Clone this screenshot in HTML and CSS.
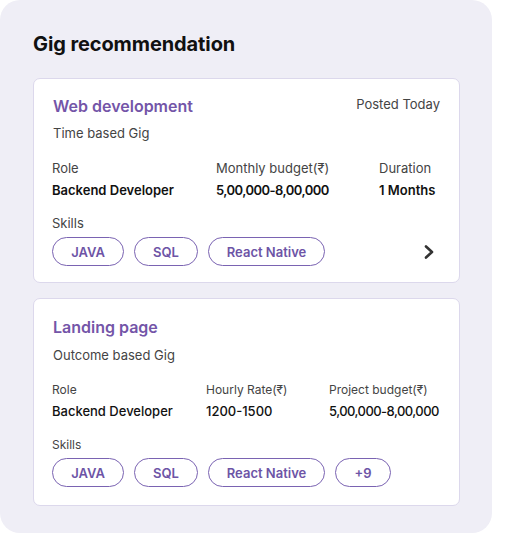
FILE: index.html
```html
<!DOCTYPE html>
<html>
<head>
<meta charset="utf-8">
<link rel="stylesheet" href="styles.css">
</head>
<body>
<div class="panel">
  <h1 class="heading">Gig recommendation</h1>
  <div class="card">
    <div class="card-head">
      <div class="gig-title">Web development</div>
      <div class="posted">Posted Today</div>
    </div>
    <div class="gig-type">Time based Gig</div>
    <div class="info info-a">
      <div class="label">Role</div>
      <div class="label">Monthly budget(₹)</div>
      <div class="label">Duration</div>
      <div class="value">Backend Developer</div>
      <div class="value num">5,00,000-8,00,000</div>
      <div class="value">1 Months</div>
    </div>
    <div class="skills-label">Skills</div>
    <div class="chips">
      <span class="chip chip-java">JAVA</span>
      <span class="chip chip-sql">SQL</span>
      <span class="chip chip-rn">React Native</span>
      <svg class="chevron" width="12" height="16" viewBox="0 0 12 16"><path d="M3 2.5 L9 8 L3 13.5" fill="none" stroke="#333" stroke-width="2.6" stroke-linecap="round" stroke-linejoin="round"/></svg>
    </div>
  </div>
  <div class="card card-b">
    <div class="card-head">
      <div class="gig-title">Landing page</div>
    </div>
    <div class="gig-type gig-type-b">Outcome based Gig</div>
    <div class="info info-b">
      <div class="label small">Role</div>
      <div class="label small">Hourly Rate(₹)</div>
      <div class="label small">Project budget(₹)</div>
      <div class="value medium">Backend Developer</div>
      <div class="value medium">1200-1500</div>
      <div class="value medium num">5,00,000-8,00,000</div>
    </div>
    <div class="skills-label small skills-b">Skills</div>
    <div class="chips">
      <span class="chip chip-java">JAVA</span>
      <span class="chip chip-sql">SQL</span>
      <span class="chip chip-rn">React Native</span>
      <span class="chip chip-more">+9</span>
    </div>
  </div>
</div>
</body>
</html>
```
FILE: styles.css
```css
* { box-sizing: border-box; }
html, body { margin: 0; padding: 0; background: #ffffff; }
body { font-family: Inter, "Noto Sans", sans-serif; }
.panel {
  width: 492px;
  height: 533px;
  background: #efeef6;
  border-radius: 20px;
  padding: 32px 32px 0 33px;
}
.heading {
  margin: 0 0 22px 0;
  font-size: 20px;
  line-height: 24px;
  font-weight: 700;
  color: #111111;
  letter-spacing: -0.1px;
}
.card {
  background: #ffffff;
  border: 1px solid #dcd8ec;
  border-radius: 7px;
  padding: 16px 19px 16px 19px;
}
.card-b { margin-top: 15px; padding-top: 17px; padding-bottom: 18px; }
.card-head {
  display: flex;
  justify-content: space-between;
  align-items: flex-start;
}
.gig-title {
  font-size: 16px;
  line-height: 22px;
  font-weight: 600;
  color: #7455a8;
}
.posted {
  font-size: 13px;
  line-height: 18px;
  color: #444444;
}
.gig-type {
  margin-top: 7px;
  font-size: 13px;
  line-height: 18px;
  color: #444444;
}
.gig-type-b { margin-top: 8px; }
.info {
  display: grid;
  row-gap: 4px;
  margin-top: 17px;
  white-space: nowrap;
}
.info-a { grid-template-columns: 164px 163px auto; margin-left: -1px; }
.info-b { grid-template-columns: 154px 123px auto; margin-left: -1px; margin-top: 16px; }
.label {
  font-size: 13px;
  line-height: 18px;
  color: #444444;
}
.label.small { font-size: 12px; line-height: 16px; }
.info-b .label.small { margin-top: 2px; }
.value {
  font-size: 13px;
  line-height: 18px;
  font-weight: 600;
  color: #111111;
}
.value.medium { font-weight: 500; }
.value.num { letter-spacing: -0.55px; }
.skills-label {
  margin-top: 15px;
  margin-left: -1px;
  font-size: 13px;
  line-height: 18px;
  color: #444444;
}
.skills-label.small { font-size: 12px; line-height: 16px; }
.skills-b { margin-top: 17px; }
.chips {
  display: flex;
  align-items: center;
  gap: 10px;
  margin-top: 5px;
  margin-left: -1px;
}
.card-b .chips { margin-top: 5px; }
.chip {
  display: inline-flex;
  align-items: center;
  justify-content: center;
  height: 29px;
  border: 1.3px solid #7a63b2;
  border-radius: 15px;
  font-size: 13px;
  font-weight: 600;
  color: #6d54a6;
}
.chip-java { width: 72px; }
.chip-sql { width: 64px; }
.chip-rn { width: 117px; }
.chip-more { width: 56px; }
.chevron { margin-left: auto; margin-right: 5px; }
```
